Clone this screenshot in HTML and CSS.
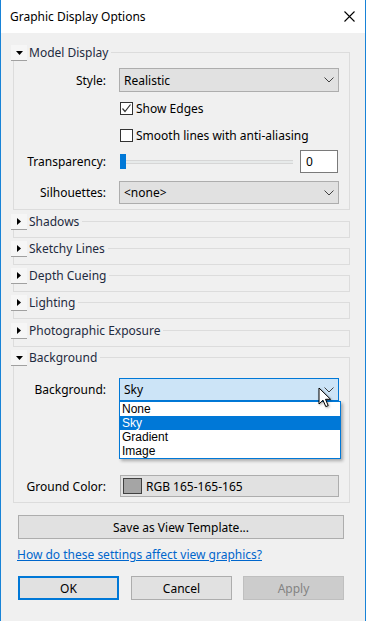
FILE: index.html
```html
<!DOCTYPE html>
<html lang="en">
<head>
    <meta charset="UTF-8">
    <meta name="viewport" content="width=device-width, initial-scale=1.0">
    <title>Graphic Display Options</title>
    <link rel="stylesheet" href="styles.css">
</head>
<body>

    <div class="window">
        <div class="titlebar">
            <span class="title">Graphic Display Options</span>
            <svg class="close" width="11" height="11" viewBox="0 0 11 11">
                <path d="M0.5 0.5 L10.5 10.5 M10.5 0.5 L0.5 10.5" stroke="#000" stroke-width="1.1" fill="none"/>
            </svg>
        </div>

        <div class="content">
            <!-- Model Display -->
            <div class="section">
                <div class="sec-head">
                    <span class="toggle"><svg width="7" height="4" viewBox="0 0 7 4"><path d="M0 0 L7 0 L3.5 4 Z" fill="#000"/></svg></span>
                    <span class="sec-title">Model Display</span>
                </div>
                <div class="sec-body model">
                    <div class="row">
                        <span class="label">Style:</span>
                        <div class="select style-select">
                            <span>Realistic</span>
                            <svg class="chev" width="10" height="6" viewBox="0 0 10 6"><path d="M0.5 0.5 L5 5 L9.5 0.5" stroke="#404040" fill="none"/></svg>
                        </div>
                    </div>
                    <div class="row check-row first">
                        <span class="label"></span>
                        <span class="box"><svg width="11" height="11" viewBox="0 0 11 11"><path d="M1.5 5.5 L4 8.5 L9.5 1.5" stroke="#333" stroke-width="1.2" fill="none"/></svg></span>
                        <span>Show Edges</span>
                    </div>
                    <div class="row check-row second">
                        <span class="label"></span>
                        <span class="box"></span>
                        <span>Smooth lines with anti-aliasing</span>
                    </div>
                    <div class="row trans-row">
                        <span class="label">Transparency:</span>
                        <div class="slider"><span class="thumb"></span></div>
                        <div class="num">0</div>
                    </div>
                    <div class="row sil-row">
                        <span class="label">Silhouettes:</span>
                        <div class="select">
                            <span>&lt;none&gt;</span>
                            <svg class="chev" width="10" height="6" viewBox="0 0 10 6"><path d="M0.5 0.5 L5 5 L9.5 0.5" stroke="#404040" fill="none"/></svg>
                        </div>
                    </div>
                </div>
            </div>

            <div class="section closed gap4">
                <div class="sec-head">
                    <span class="toggle"><svg width="4" height="7" viewBox="0 0 4 7"><path d="M0 0 L4 3.5 L0 7 Z" fill="#000"/></svg></span>
                    <span class="sec-title">Shadows</span>
                </div>
                <div class="sec-body"></div>
            </div>

            <div class="section closed">
                <div class="sec-head">
                    <span class="toggle"><svg width="4" height="7" viewBox="0 0 4 7"><path d="M0 0 L4 3.5 L0 7 Z" fill="#000"/></svg></span>
                    <span class="sec-title">Sketchy Lines</span>
                </div>
                <div class="sec-body"></div>
            </div>

            <div class="section closed">
                <div class="sec-head">
                    <span class="toggle"><svg width="4" height="7" viewBox="0 0 4 7"><path d="M0 0 L4 3.5 L0 7 Z" fill="#000"/></svg></span>
                    <span class="sec-title">Depth Cueing</span>
                </div>
                <div class="sec-body"></div>
            </div>

            <div class="section closed">
                <div class="sec-head">
                    <span class="toggle"><svg width="4" height="7" viewBox="0 0 4 7"><path d="M0 0 L4 3.5 L0 7 Z" fill="#000"/></svg></span>
                    <span class="sec-title">Lighting</span>
                </div>
                <div class="sec-body"></div>
            </div>

            <div class="section closed gap4">
                <div class="sec-head">
                    <span class="toggle"><svg width="4" height="7" viewBox="0 0 4 7"><path d="M0 0 L4 3.5 L0 7 Z" fill="#000"/></svg></span>
                    <span class="sec-title">Photographic Exposure</span>
                </div>
                <div class="sec-body"></div>
            </div>

            <!-- Background -->
            <div class="section bg-section">
                <div class="sec-head">
                    <span class="toggle"><svg width="7" height="4" viewBox="0 0 7 4"><path d="M0 0 L7 0 L3.5 4 Z" fill="#000"/></svg></span>
                    <span class="sec-title">Background</span>
                </div>
                <div class="sec-body bg">
                    <div class="row">
                        <span class="label">Background:</span>
                        <div class="select-wrap">
                            <div class="select open">
                                <span>Sky</span>
                                <svg class="chev" width="10" height="6" viewBox="0 0 10 6"><path d="M0.5 0.5 L5 5 L9.5 0.5" stroke="#404040" fill="none"/></svg>
                            </div>
                            <ul class="drop">
                                <li>None</li>
                                <li class="active">Sky</li>
                                <li>Gradient</li>
                                <li>Image</li>
                            </ul>
                            <svg class="cursor" width="14" height="21" viewBox="0 0 14 21">
                                <path d="M1 1 L1 17 L5 13.2 L7.8 19.6 L10.2 18.6 L7.5 12.3 L12.6 12.3 Z" fill="#fff" stroke="#000" stroke-width="1" stroke-linejoin="round"/>
                            </svg>
                        </div>
                    </div>
                    <div class="row ground-row">
                        <span class="label">Ground Color:</span>
                        <div class="color-field">
                            <span class="swatch"></span>
                            <span>RGB 165-165-165</span>
                        </div>
                    </div>
                </div>
            </div>

            <button class="template">Save as View Template...</button>

            <a class="help" href="#">How do these settings affect view graphics?</a>

            <div class="actions">
                <button class="ok">OK</button>
                <button class="cancel">Cancel</button>
                <button class="apply" disabled>Apply</button>
            </div>
        </div>
    </div>

</body>
</html>
```

FILE: styles.css
```css
body {
    margin: 0;
    padding: 0;
    background-color: white;
    font-family: "Noto Sans", "Open Sans", sans-serif;
    font-size: 12px;
    color: #000;
}

.window {
    width: 366px;
    height: 621px;
    box-sizing: border-box;
    border-left: 1px solid #1883d7;
    border-right: 1px solid #1883d7;
    background-color: #f0f0f0;
    overflow: hidden;
}

.titlebar {
    height: 33px;
    background-color: white;
    display: flex;
    align-items: center;
    padding-left: 9px;
    padding-right: 10px;
}

.title {
    flex: 1;
    line-height: 16px;
    margin-top: 1px;
}

.close {
    display: block;
    margin-top: -1px;
}

.content {
    padding-top: 12px;
}

/* collapsible group boxes */
.section {
    width: 337px;
    margin-left: 12px;
}

.section.closed {
    margin-top: 3px;
}

.section.gap4 {
    margin-top: 4px;
}

.section.bg-section {
    margin-top: 3px;
}

.sec-head {
    display: flex;
    align-items: center;
    height: 16px;
    margin-left: -2px;
    position: relative;
    z-index: 1;
}

.toggle {
    width: 16px;
    height: 15px;
    border-bottom: 1px solid #a0a0a0;
    background-color: #f6f6f6;
    display: flex;
    align-items: center;
    justify-content: center;
}

.toggle svg {
    display: block;
}

.sec-title {
    background-color: #f0f0f0;
    line-height: 16px;
    padding: 0 3px 0 2px;
    color: #1e2b40;
}

.sec-body {
    margin-top: -9px;
    border: 1px solid #dcdcdc;
    height: 15px;
}

.sec-body.model {
    height: auto;
    padding: 15px 10px 5px 0;
}

.sec-body.bg {
    height: auto;
    padding: 20px 10px 5px 0;
}

.row {
    display: flex;
    align-items: center;
}

.label {
    width: 92px;
    margin-right: 13px;
    text-align: right;
    flex-shrink: 0;
}

.select {
    width: 220px;
    height: 24px;
    box-sizing: border-box;
    border: 1px solid #adadad;
    background-color: #e1e1e1;
    display: flex;
    align-items: center;
    justify-content: space-between;
    padding: 0 4px 0 4px;
}

.select .chev {
    display: block;
}

.check-row {
    height: 13px;
}

.check-row.first {
    margin-top: 10px;
}

.check-row.second {
    margin-top: 14px;
}

.box {
    width: 13px;
    height: 13px;
    box-sizing: border-box;
    border: 1px solid #333;
    background-color: white;
    margin-left: 1px;
    margin-right: 3px;
    display: flex;
    align-items: center;
    justify-content: center;
}

.trans-row {
    margin-top: 8px;
}

.slider {
    width: 173px;
    height: 15px;
    margin-left: 1px;
    margin-right: 7px;
    background: linear-gradient(#f0f0f0 6px, #d6d6d6 6px, #d6d6d6 7px, #e7eaea 7px, #e7eaea 9px, #d6d6d6 9px, #d6d6d6 10px, #f0f0f0 10px);
}

.thumb {
    display: block;
    width: 6px;
    height: 15px;
    background-color: #0078d7;
}

.num {
    width: 38px;
    height: 23px;
    box-sizing: border-box;
    border: 1px solid #7a7a7a;
    background-color: white;
    padding-left: 5px;
    line-height: 21px;
}

.sil-row {
    margin-top: 8px;
}

.sil-row .select {
    height: 23px;
}

.select-wrap {
    position: relative;
}

.select.open {
    height: 23px;
    background-color: #cce4f7;
    border-color: #0078d7;
}

.drop {
    position: absolute;
    top: 23px;
    left: 0;
    width: 222px;
    box-sizing: border-box;
    margin: 0;
    padding: 0;
    list-style-type: none;
    background-color: white;
    border: 1px solid #0078d7;
    box-shadow: 2px 2px 3px rgba(0, 0, 0, 0.3);
    z-index: 2;
}

.drop li {
    height: 14px;
    line-height: 14px;
    padding-left: 2px;
    font-family: "Liberation Sans", Arial, sans-serif;
    font-size: 12px;
}

.drop li.active {
    background-color: #0078d7;
    color: white;
}

.cursor {
    position: absolute;
    left: 199px;
    top: 9px;
    z-index: 3;
    filter: drop-shadow(1px 1px 1px rgba(0, 0, 0, 0.35));
}

.ground-row {
    margin-top: 74px;
}

.color-field {
    width: 219px;
    height: 22px;
    box-sizing: border-box;
    margin-left: 1px;
    border: 1px solid #adadad;
    background-color: #e1e1e1;
    display: flex;
    align-items: center;
    padding-left: 2px;
}

.swatch {
    width: 19px;
    height: 16px;
    box-sizing: border-box;
    border: 1px solid #404040;
    background-color: #a5a5a5;
    margin-right: 4px;
}

/* buttons */
button {
    font-family: "Noto Sans", "Open Sans", sans-serif;
    font-size: 12px;
    color: #000;
    background-color: #e1e1e1;
    border: 1px solid #adadad;
    height: 24px;
    padding: 0;
    box-sizing: border-box;
}

.template {
    display: block;
    width: 326px;
    margin: 12px 0 0 17px;
}

.help {
    display: inline-block;
    margin: 8px 0 0 16px;
    line-height: 16px;
    color: #0066cc;
    text-decoration: underline;
}

.actions {
    display: flex;
    margin: 13px 0 0 17px;
}

.actions button {
    width: 101px;
}

.ok {
    border: 2px solid #0078d7;
}

.cancel {
    margin-left: 12px;
}

.apply {
    margin-left: 11px;
    background-color: #cccccc;
    border-color: #bfbfbf;
    color: #838383;
}
```
